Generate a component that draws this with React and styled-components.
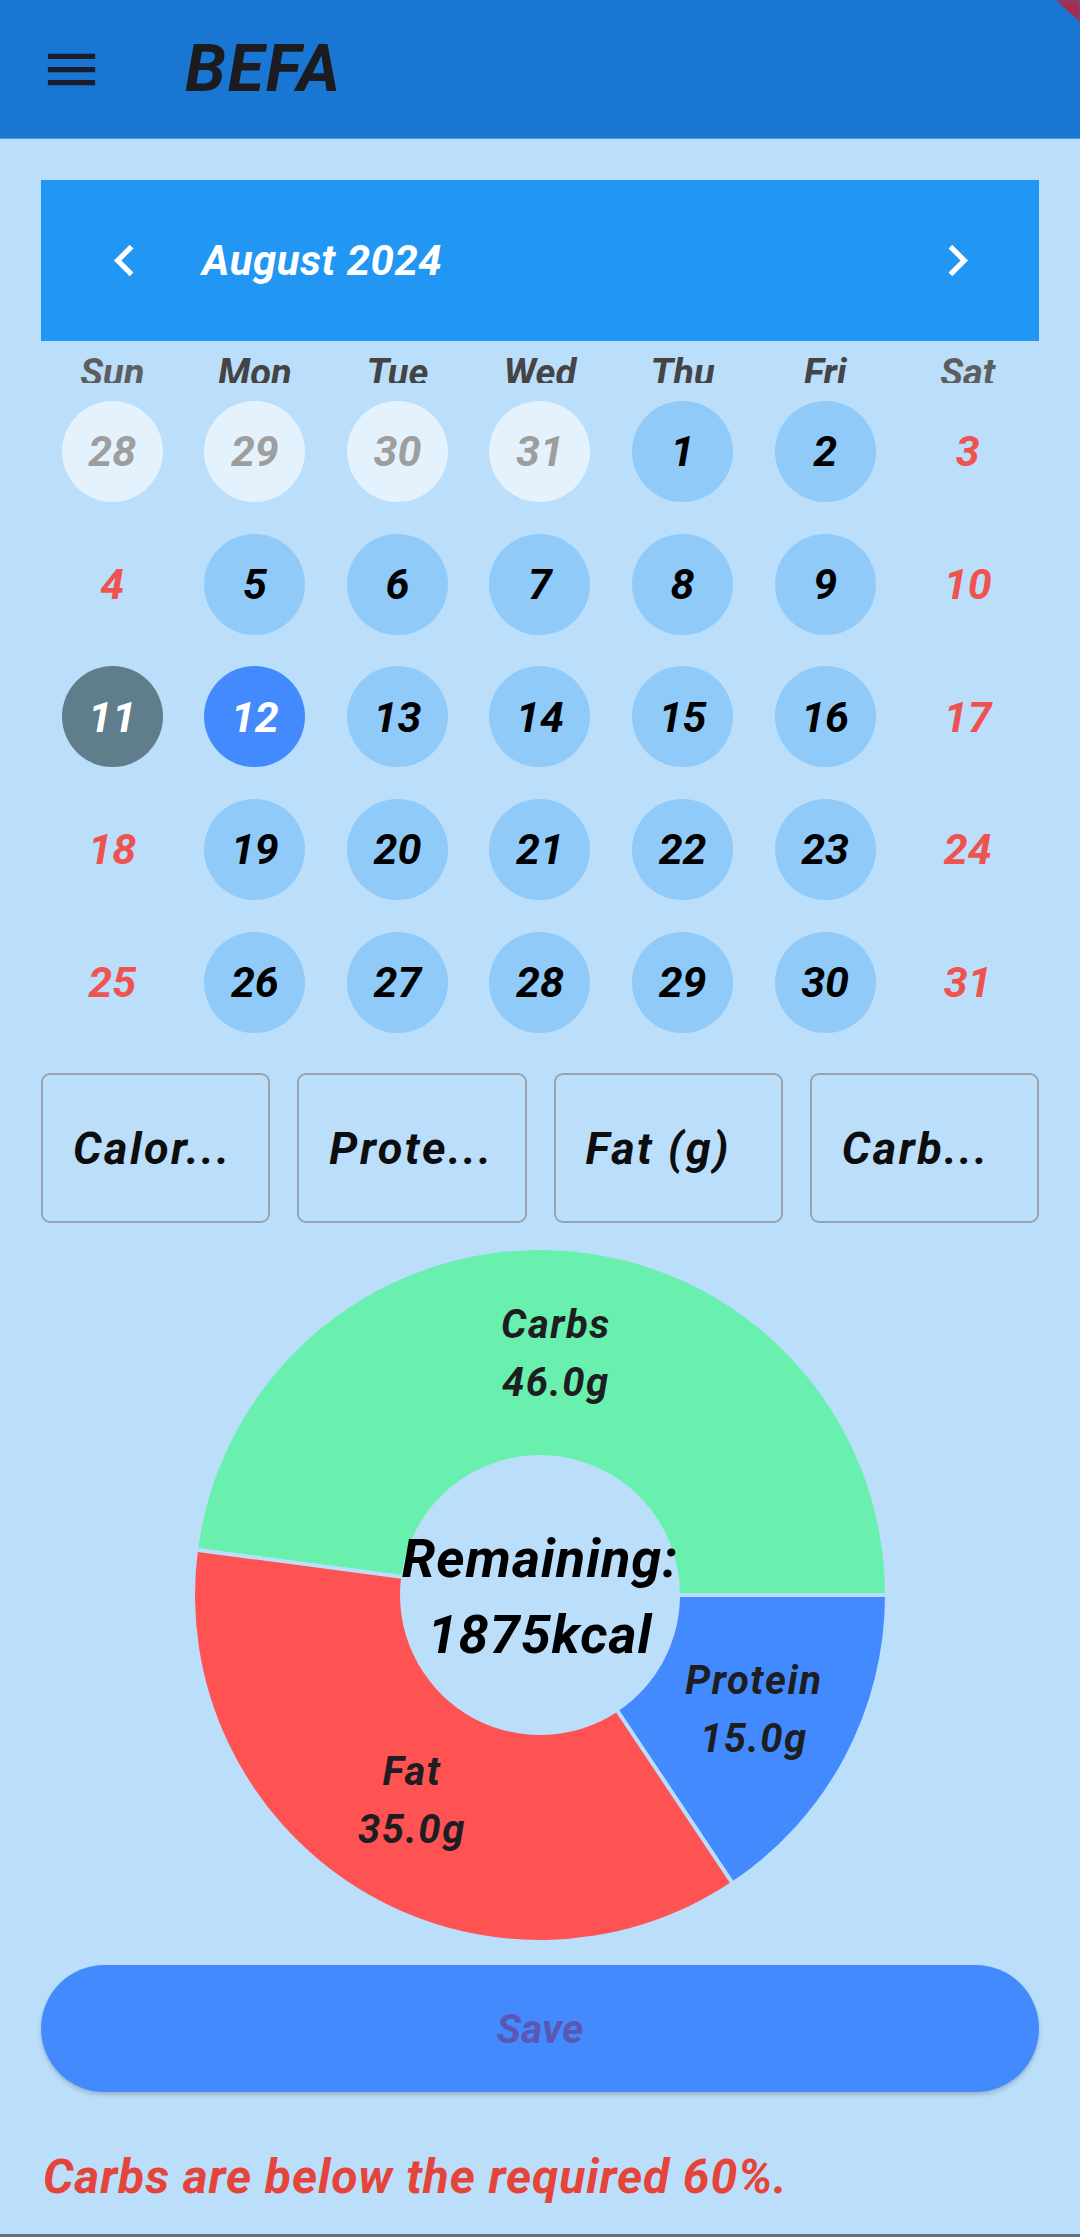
import React from 'react';
import styled, { createGlobalStyle } from 'styled-components';

const FONT = `Roboto, "Noto Sans", "DejaVu Sans", sans-serif`;

const GlobalStyle = createGlobalStyle`
  html, body { margin: 0; padding: 0; background: #BBDEFB; }
  body { font-family: ${FONT}; }
  *, *::before, *::after { box-sizing: border-box; }
`;

const Page = styled.div`
  position: relative;
  width: 1080px;
  height: 2237px;
  background: #BBDEFB;
  overflow: hidden;
  display: flex;
  flex-direction: column;
  border-bottom: 3px solid #5f7383;
  font-family: ${FONT};
  font-weight: 700;
  font-style: italic;
`;

const AppBar = styled.header`
  height: 138px;
  flex: none;
  background: #1976D2;
  display: flex;
  align-items: center;
  padding-left: 40px;
  gap: 82px;
  box-shadow: 0 1px 0 #4f94dc;
`;

const MenuButton = styled.div`
  width: 63px;
  height: 63px;
  display: flex;
  align-items: center;
  justify-content: center;
  color: #1b1d2a;
`;

const Title = styled.h1`
  margin: 0;
  font-size: 66px;
  line-height: 1;
  font-weight: 700;
  font-style: italic;
  color: #1c1b1f;
  letter-spacing: 2px;
`;

const DebugCorner = styled.div`
  position: absolute;
  top: 0;
  right: 0;
  width: 24px;
  height: 22px;
  background: #a52d52;
  clip-path: polygon(0 0, 100% 0, 100% 100%);
  filter: blur(1px);
`;

const Content = styled.main`
  padding: 42px 41px 0;
  display: flex;
  flex-direction: column;
`;

const MonthBar = styled.div`
  height: 161px;
  background: #2196F3;
  display: flex;
  align-items: center;
  padding: 0 50px 0 52px;
`;

const NavIcon = styled.div`
  width: 63px;
  height: 63px;
  display: flex;
  align-items: center;
  justify-content: center;
  color: #ffffff;
  flex: none;
`;

const MonthLabel = styled.div`
  flex: 1;
  margin-left: 46px;
  color: #ffffff;
  font-size: 42px;
  letter-spacing: 0.5px;
`;

const WeekRow = styled.div`
  display: grid;
  grid-template-columns: repeat(7, 1fr);
  height: 44px;
`;

const WeekdayLabel = styled.div`
  text-align: center;
  padding-top: 10px;
  font-size: 38px;
  line-height: 44px;
  height: 42px;
  overflow: hidden;
  color: ${(p) => (p.$weekend ? '#5e5e5e' : '#444444')};
`;

const DayGrid = styled.div`
  display: grid;
  grid-template-columns: repeat(7, 1fr);
  grid-auto-rows: 132.7px;
`;

const DayCell = styled.div`
  display: flex;
  align-items: center;
  justify-content: center;
`;

const dayStyles = {
  outside: { bg: '#E3F2FD', fg: '#9E9E9E' },
  normal: { bg: '#90CAF9', fg: '#000000' },
  weekend: { bg: 'transparent', fg: '#EF5350' },
  today: { bg: '#607D8B', fg: '#ffffff' },
  selected: { bg: '#448AFF', fg: '#ffffff' },
};

const DayCircle = styled.div`
  width: 101px;
  height: 101px;
  border-radius: 50%;
  display: flex;
  align-items: center;
  justify-content: center;
  font-size: 43px;
  background: ${(p) => dayStyles[p.$kind].bg};
  color: ${(p) => dayStyles[p.$kind].fg};
`;

const MacroRow = styled.div`
  margin-top: 25px;
  display: grid;
  grid-template-columns: repeat(4, 1fr);
  gap: 27px;
  height: 150px;
`;

const MacroField = styled.div`
  border: 2px solid #9aa3ab;
  border-radius: 9px;
  display: flex;
  align-items: center;
  padding: 0 30px;
  font-size: 45px;
  letter-spacing: 2.5px;
  color: #0d0d0d;
  white-space: nowrap;
  overflow: hidden;
`;

const ChartWrap = styled.div`
  margin-top: 27px;
  height: 690px;
  display: flex;
  justify-content: center;
`;

const ChartText = styled.text`
  font-family: ${FONT};
  font-weight: 700;
  font-style: italic;
  letter-spacing: ${(p) => p.$spacing || 0}px;
`;

const SaveButton = styled.button`
  margin-top: 25px;
  height: 127px;
  border: none;
  border-radius: 64px;
  background: #448AFF;
  box-shadow: 0 3px 4px rgba(0, 0, 0, 0.18);
  font-family: ${FONT};
  font-weight: 700;
  font-style: italic;
  font-size: 41px;
  color: #5b57b3;
`;

const ErrorText = styled.p`
  margin: 56px 0 0 2px;
  font-size: 48px;
  letter-spacing: 0.9px;
  line-height: normal;
  color: #E5443A;
`;

const MenuIcon = () => (
  <svg width="63" height="63" viewBox="0 0 24 24" fill="currentColor">
    <path d="M3 18h18v-2H3v2zm0-5h18v-2H3v2zm0-7v2h18V6H3z" />
  </svg>
);

const ChevronLeft = () => (
  <svg width="63" height="63" viewBox="0 0 24 24" fill="currentColor">
    <path d="M15.41 7.41L14 6l-6 6 6 6 1.41-1.41L10.83 12z" />
  </svg>
);

const ChevronRight = () => (
  <svg width="63" height="63" viewBox="0 0 24 24" fill="currentColor">
    <path d="M10 6L8.59 7.41 13.17 12l-4.58 4.59L10 18l6-6z" />
  </svg>
);

const weekdays = ['Sun', 'Mon', 'Tue', 'Wed', 'Thu', 'Fri', 'Sat'];

const weeks = [
  [['28', 'outside'], ['29', 'outside'], ['30', 'outside'], ['31', 'outside'], ['1', 'normal'], ['2', 'normal'], ['3', 'weekend']],
  [['4', 'weekend'], ['5', 'normal'], ['6', 'normal'], ['7', 'normal'], ['8', 'normal'], ['9', 'normal'], ['10', 'weekend']],
  [['11', 'today'], ['12', 'selected'], ['13', 'normal'], ['14', 'normal'], ['15', 'normal'], ['16', 'normal'], ['17', 'weekend']],
  [['18', 'weekend'], ['19', 'normal'], ['20', 'normal'], ['21', 'normal'], ['22', 'normal'], ['23', 'normal'], ['24', 'weekend']],
  [['25', 'weekend'], ['26', 'normal'], ['27', 'normal'], ['28', 'normal'], ['29', 'normal'], ['30', 'normal'], ['31', 'weekend']],
];

const macros = ['Calor...', 'Prote...', 'Fat (g)', 'Carb...'];

const sections = [
  { name: 'Protein', value: 15, color: '#448AFF' },
  { name: 'Fat', value: 35, color: '#FF5252' },
  { name: 'Carbs', value: 46, color: '#69F0AE' },
];

const C = 345;
const R_OUT = 345;
const R_IN = 140;

const pt = (r, deg) => {
  const a = (deg * Math.PI) / 180;
  return [C + r * Math.cos(a), C + r * Math.sin(a)];
};

const sectorPath = (a0, a1) => {
  const large = a1 - a0 > 180 ? 1 : 0;
  const [x0, y0] = pt(R_OUT, a0);
  const [x1, y1] = pt(R_OUT, a1);
  const [x2, y2] = pt(R_IN, a1);
  const [x3, y3] = pt(R_IN, a0);
  return `M${x0} ${y0} A${R_OUT} ${R_OUT} 0 ${large} 1 ${x1} ${y1} L${x2} ${y2} A${R_IN} ${R_IN} 0 ${large} 0 ${x3} ${y3} Z`;
};

const MacroDonut = () => {
  const total = sections.reduce((s, x) => s + x.value, 0);
  let start = 0;
  const arcs = sections.map((s) => {
    const sweep = (s.value / total) * 360;
    const a0 = start;
    const a1 = start + sweep;
    start = a1;
    const mid = (a0 + a1) / 2;
    const [lx, ly] = pt((R_IN + R_OUT) / 2, mid);
    return { ...s, a0, a1, lx, ly };
  });
  return (
    <svg width="690" height="690" viewBox="0 0 690 690">
      {arcs.map((a) => (
        <path key={a.name} d={sectorPath(a.a0, a.a1)} fill={a.color} />
      ))}
      {arcs.map((a) => {
        const [x0, y0] = pt(R_IN - 2, a.a0);
        const [x1, y1] = pt(R_OUT + 2, a.a0);
        return <line key={`sep-${a.name}`} x1={x0} y1={y0} x2={x1} y2={y1} stroke="#BBDEFB" strokeWidth="4" />;
      })}
      {arcs.map((a) => (
        <ChartText key={`t-${a.name}`} $spacing={1.5} x={a.lx} textAnchor="middle" fontSize="40" fill="#1d1d22">
          <tspan x={a.lx} y={a.ly - 29} dominantBaseline="central">{a.name}</tspan>
          <tspan x={a.lx} y={a.ly + 29} dominantBaseline="central">{a.value.toFixed(1)}g</tspan>
        </ChartText>
      ))}
      <ChartText $spacing={1} textAnchor="middle" fontSize="54" fill="#000">
        <tspan x={C} y={308} dominantBaseline="central">Remaining:</tspan>
        <tspan x={C} y={384} dominantBaseline="central">1875kcal</tspan>
      </ChartText>
    </svg>
  );
};

export default function App() {
  return (
    <>
      <GlobalStyle />
      <Page>
        <AppBar>
          <MenuButton><MenuIcon /></MenuButton>
          <Title>BEFA</Title>
        </AppBar>
        <DebugCorner />
        <Content>
          <MonthBar>
            <NavIcon><ChevronLeft /></NavIcon>
            <MonthLabel>August 2024</MonthLabel>
            <NavIcon><ChevronRight /></NavIcon>
          </MonthBar>
          <WeekRow>
            {weekdays.map((d, i) => (
              <WeekdayLabel key={d} $weekend={i === 0 || i === 6}>{d}</WeekdayLabel>
            ))}
          </WeekRow>
          <DayGrid>
            {weeks.flat().map(([n, kind], i) => (
              <DayCell key={i}>
                <DayCircle $kind={kind}>{n}</DayCircle>
              </DayCell>
            ))}
          </DayGrid>
          <MacroRow>
            {macros.map((m) => (
              <MacroField key={m}>{m}</MacroField>
            ))}
          </MacroRow>
          <ChartWrap>
            <MacroDonut />
          </ChartWrap>
          <SaveButton type="button">Save</SaveButton>
          <ErrorText>Carbs are below the required 60%.</ErrorText>
        </Content>
      </Page>
    </>
  );
}
